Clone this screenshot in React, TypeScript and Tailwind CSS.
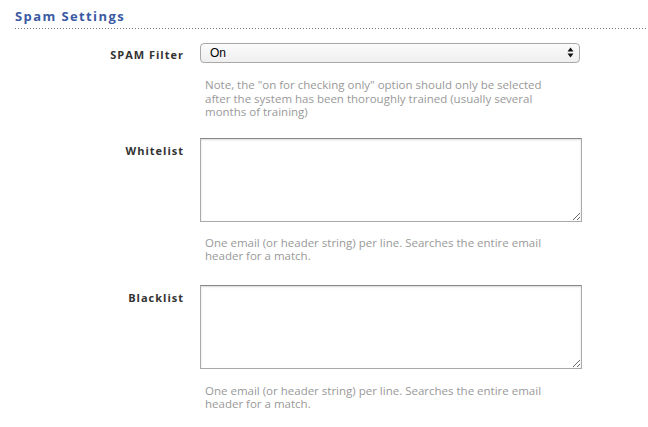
import React, { useState } from 'react';

const font = { fontFamily: '"Open Sans", "DejaVu Sans", sans-serif' };

const Row: React.FC<{
  label: string;
  labelTop: string;
  className?: string;
  helpTop?: string;
  children: React.ReactNode;
  help: React.ReactNode;
}> = ({ label, labelTop, className = '', helpTop = 'mt-[15px]', children, help }) => (
  <div className={`flex ${className}`}>
    <div className={`w-[185px] shrink-0 pr-px text-right text-[11px] font-bold tracking-[1px] text-[#333] ${labelTop}`}>
      {label}
    </div>
    <div className="ml-[15px] w-[382px]">
      {children}
      <p className={`${helpTop} pl-[5px] pr-[30px] text-[11.5px] leading-[13.5px] text-[#999]`}>{help}</p>
    </div>
  </div>
);

const App: React.FC = () => {
  const [filter, setFilter] = useState('On');

  return (
    <div className="h-[427px] w-[648px] bg-white" style={font}>
      <div className="pl-[15px] pt-[7px]">
        <h2 className="text-[13px] font-bold leading-[18px] tracking-[1.4px] text-[#3b5aa3]">Spam Settings</h2>
        <div className="mt-[3px] h-px bg-[linear-gradient(to_right,#777_1px,transparent_1px)] bg-[length:3px_1px]" />
      </div>

      <div className="mt-[14px] flex flex-col gap-[19px]">
        <Row
          label="SPAM Filter"
          labelTop="pt-[4px]"
          help='Note, the "on for checking only" option should only be selected after the system has been thoroughly trained (usually several months of training)'
        >
          <div className="relative h-[20px] w-[380px] rounded-[4px] border border-[#a8a8a8] bg-[linear-gradient(#fbfbfb,#efefef)]">
            <select
              value={filter}
              onChange={(e) => setFilter(e.target.value)}
              className="absolute inset-0 m-0 h-[18px] w-full appearance-none bg-transparent p-0 pl-[9px] text-[12px] leading-[18px] text-black outline-none"
              style={{ fontFamily: '"Liberation Sans", Arial, sans-serif' }}
            >
              <option>On</option>
              <option>Off</option>
              <option>On for checking only</option>
            </select>
            <svg className="pointer-events-none absolute right-[5px] top-[3px]" width="7" height="11" viewBox="0 0 7 11">
              <path d="M3.5 0.5 L6.5 4.5 L0.5 4.5 Z" fill="#111" />
              <path d="M3.5 10.5 L6.5 6.5 L0.5 6.5 Z" fill="#111" />
            </svg>
          </div>
        </Row>

        <Row
          label="Whitelist"
          labelTop="pt-[5px]"
          helpTop="mt-[14px]"
          help="One email (or header string) per line. Searches the entire email header for a match."
        >
          <textarea className="block h-[84px] w-[382px] resize-y border border-[#aaa] border-t-[#888] shadow-[inset_0_1px_2px_rgba(0,0,0,0.15)] outline-none" />
        </Row>

        <Row
          label="Blacklist"
          labelTop="pt-[5px]"
          className="mt-[3px]"
          help="One email (or header string) per line. Searches the entire email header for a match."
        >
          <textarea className="block h-[84px] w-[382px] resize-y border border-[#aaa] border-t-[#888] shadow-[inset_0_1px_2px_rgba(0,0,0,0.15)] outline-none" />
        </Row>
      </div>
    </div>
  );
};

export default App;
